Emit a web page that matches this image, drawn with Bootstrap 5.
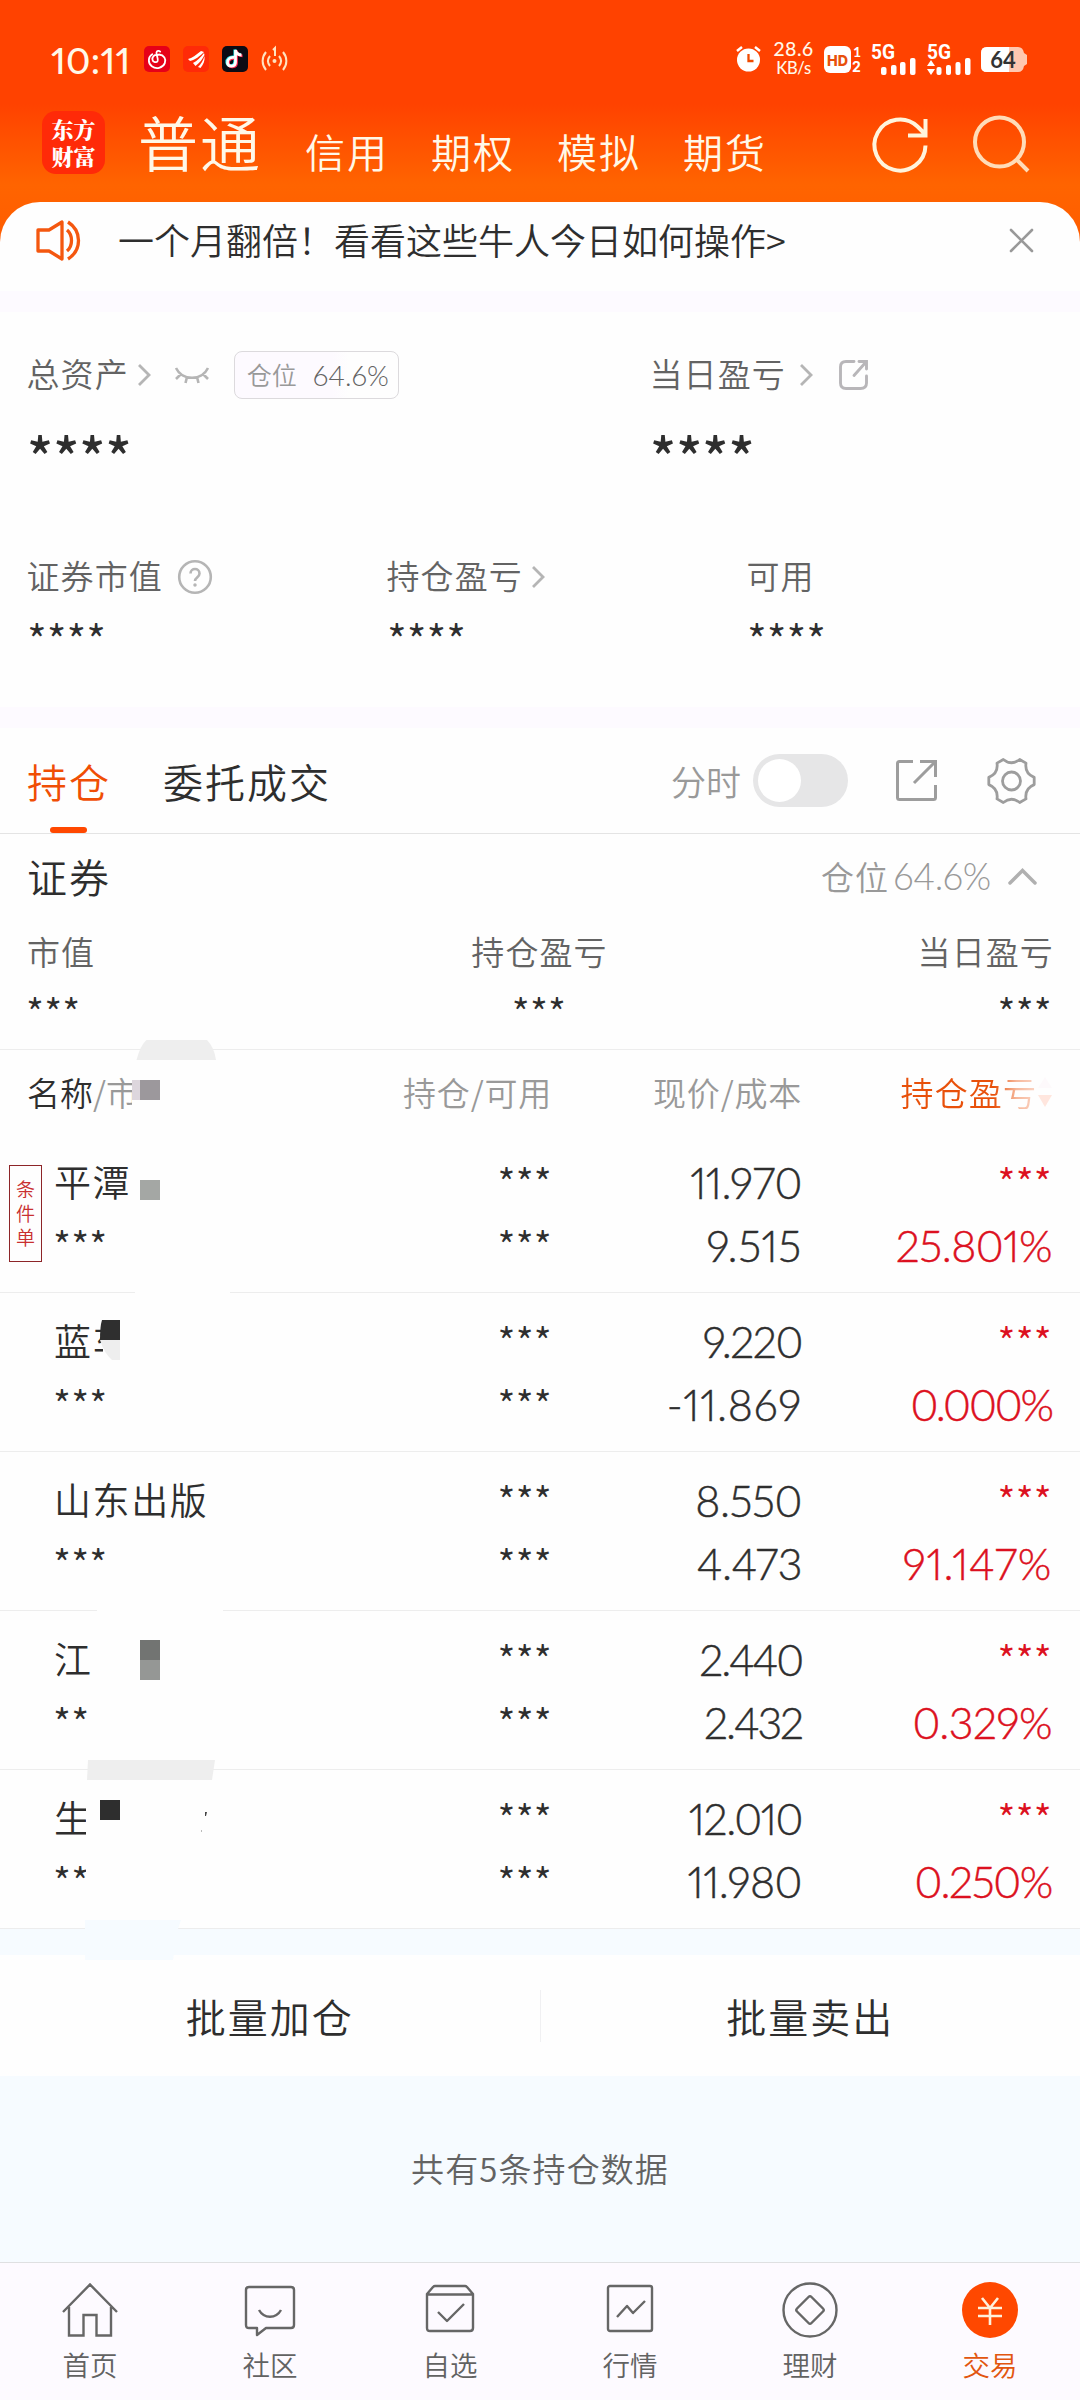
<!DOCTYPE html>
<html lang="zh-CN">
<head>
<meta charset="utf-8">
<meta name="viewport" content="width=device-width, initial-scale=1">
<title>持仓</title>
<link href="https://cdn.jsdelivr.net/npm/bootstrap@5.3.0/dist/css/bootstrap.min.css" rel="stylesheet">
<style>
body{width:1080px;height:2400px;margin:0;background:#fefefe;color:#2e2e2e;font-family:"Noto Sans CJK SC",sans-serif;font-weight:350;line-height:1;overflow:hidden}
svg{display:block;flex:none;overflow:visible}
.latin{font-family:Lato,"Noto Sans CJK SC",sans-serif;font-variant-numeric:proportional-nums}
.tone-mid{color:#636363}.tone-soft{color:#999}.tone-hot{color:#f04e05}.tone-rise{color:#dc1020}
.app-head{height:242px;background:linear-gradient(#ff4200 0,#ff4200 104px,#ff6400 185px,#ff5c00 242px);color:#fff8e8}
.status{height:118px;padding:0 52px 0 51px}
.clock{font-size:37px;font-weight:500;width:78px;letter-spacing:.3px;white-space:nowrap}
.brand{height:84px}
.logo-box{width:63px;height:63px;border-radius:14px;background:#ff2a08;color:#fff;font-family:"Noto Serif CJK SC","Noto Sans CJK SC",serif;font-weight:900;font-size:22px;text-align:center;padding-top:4px}
.logo-box span{display:block;line-height:27px;height:27px}
.brand-main{font-size:60px;letter-spacing:2px}
.brand-tab{font-size:40px;letter-spacing:2px;margin-right:42px;margin-top:13px}
.sheet{margin-top:-40px;height:89px;background:#fefefe;border-radius:40px 40px 0 0;padding:0 47px 12px 36px}
.notice{font-size:36px;padding-bottom:3px}
.strip{height:21px;background:#fdfaff}
.lab{font-size:33px;letter-spacing:1.1px;line-height:34px}
.assets .lab{padding-bottom:4px;margin-left:-1.5px}
.ttl{font-size:40px;letter-spacing:2px;line-height:42px}
.star{line-height:20px;height:20px;font-family:"Noto Sans CJK SC",sans-serif;margin-left:-1px}
.star-xl{font-size:54px;font-weight:500;padding-top:8px}
.star-lg{font-size:43px;padding-top:6px}
.star-md{font-size:39px;letter-spacing:.2px;padding-top:8px}
.pos-chip{width:165px;height:48px;border:1px solid #dcdadd;border-radius:8px;background:linear-gradient(90deg,#fdfaff 60%,#fefefe 70%);font-size:25px;padding:0 9px 0 12px}
.tabs-bar{height:106px;border-bottom:1px solid #e4e4e4;padding-left:27px;padding-right:44px}
.tab-on::after{content:"";position:absolute;left:23px;bottom:0;width:37px;height:6px;border-radius:3px;background:#ff4800}
.tgl{width:95px;height:53px;border-radius:27px;background:#e6e6e7;padding:5px}
.tgl i{display:block;width:43px;height:43px;border-radius:50%;background:#fff}
.grid-row{display:grid;grid-template-columns:302px 250px 250px 250px;height:159px;border-bottom:1px solid #ededed;padding-top:29px;grid-template-rows:40px 40px;row-gap:23px}
.grid-row>*{text-align:right;line-height:40px;height:40px}
.grid-row>.nm,.grid-row>.nq{text-align:left;padding-left:54px}
.grid-row>.nm{font-size:37px;letter-spacing:1.6px;margin-top:-2px}
.num{font-size:43px;font-family:Lato,sans-serif;font-variant-numeric:proportional-nums;letter-spacing:-.5px;-webkit-text-stroke:.45px currentColor}
.num.nt1{letter-spacing:-1.4px}.num.nt2{letter-spacing:-2.1px}.num.nw{letter-spacing:.7px}
.grid-row>.star{padding-top:0;margin-top:-2px}
.th-row{display:grid;grid-template-columns:302px 250px 250px 250px;height:85px;border-top:1px solid #ededed;align-items:center;text-align:right}
.fade-hot{background:linear-gradient(90deg,#e8500a 0,#e8500a 68%,#f6b79a 85%,#fbd5c5);-webkit-background-clip:text;background-clip:text;color:transparent}
.cond{left:9px;top:31px;width:33px;height:97px;border:1px solid #8d2528;color:#c93030;font-size:19px;line-height:24px;text-align:center;padding-top:11px}
.grid-row>.cond{line-height:24px;height:97px;text-align:center}
.patch{position:absolute;display:block}
.acts{height:121px;background:#fefefe}
.acts .mid{width:1px;height:52px;background:#f0f0f2}
.tail{background:#f6fbff;height:186px;padding-bottom:2px}
.navb{height:138px;background:#fdfaff;border-top:1px solid #dfe0e2;padding-top:19px}
.navb a{width:180px;text-decoration:none;color:#626262;font-size:27.5px}
.navb a svg{margin-bottom:13px}
</style>
</head>
<body>
<header class="app-head">
  <div class="status d-flex align-items-center">
    <span class="latin clock">10:11</span>
    <svg style="margin-left:15px" width="26" height="26" viewBox="0 0 26 26"><rect width="26" height="26" rx="5" fill="#e60018"/><path d="M14 9c-4-.8-6 2-5.500 4.800.4 2.500 4 3.300 5.200 1 .8-1.800-1.500-6-1.200-8.200.2-2 2.500-2.200 3.700-1M15 8.500c5 .5 7.500 4.500 5.800 8.700-2 5-8.800 6.300-13 3C3.600 17 4 10.700 8.300 8.300" fill="none" stroke="#fff" stroke-width="1.800" stroke-linecap="round"/></svg>
    <svg style="margin-left:13px" width="26" height="26" viewBox="0 0 26 26"><rect width="26" height="26" rx="5" fill="#ff2a08"/><path d="M5 13c4-1 8-4 13-8l3 1c-4 4-9 8-14 9zM10 17c4-2 8-6 11-10l.5 2c-2 4-5 8-9 11zM15 21c3-3 5-6 6.500-11 .5 5-1 8-4 12z" fill="#fff"/></svg>
    <svg style="margin-left:13px" width="26" height="26" viewBox="0 0 26 26"><rect width="26" height="26" rx="5" fill="#0c0b14"/><g fill="none" stroke-width="2.800"><path d="M12 11.500c-4-.5-7 2-6.500 5.500.6 4 8 4.500 8-1V4c.5 3 2.500 5 6 5" stroke="#25e6e6" transform="translate(-.7 -.5)"/><path d="M12 11.500c-4-.5-7 2-6.500 5.500.6 4 8 4.500 8-1V4c.5 3 2.500 5 6 5" stroke="#ff2a55" transform="translate(1 .8)"/><path d="M12 11.500c-4-.5-7 2-6.500 5.500.6 4 8 4.500 8-1V4c.5 3 2.500 5 6 5" stroke="#fff"/></g></svg>
    <svg style="margin-left:13px" width="27" height="26" viewBox="0 0 27 26" fill="none" stroke="#ffe3c0" stroke-width="2"><path d="M5 6C.5 11.500.5 18.500 5 24M22 6c4.500 5.500 4.500 12.500 0 18M9 10c-2.500 3-2.500 7 0 10M18 10c2.500 3 2.500 7 0 10M12 4l2-2v8"/><circle cx="13.500" cy="15" r="2" fill="#ffe3c0" stroke="none"/></svg>
    <svg class="ms-auto" width="25" height="26" viewBox="0 0 25 26"><circle cx="12.500" cy="14" r="11.500" fill="#fff"/><path d="M1 5l5-4M24 5l-5-4" stroke="#fff" stroke-width="2.500"/><path d="M12.500 8v7h5" fill="none" stroke="#f04a00" stroke-width="2.300"/></svg>
    <div class="latin text-center" style="margin-left:11px;width:43px;font-size:19.500px;line-height:18px;font-weight:500;letter-spacing:.4px;padding-bottom:2px">28.6<br><span style="font-size:16.500px;letter-spacing:-.3px">KB/s</span></div>
    <svg style="margin-left:9px" width="38" height="27" viewBox="0 0 38 27"><rect width="27" height="27" rx="6" fill="#fff"/><text x="13.500" y="19.500" font-family="Inter,sans-serif" font-size="15" font-weight="800" text-anchor="middle" fill="#e8500a" textLength="21" lengthAdjust="spacingAndGlyphs">HD</text><text x="33" y="11" font-family="Lato,sans-serif" font-size="14" font-weight="700" text-anchor="middle" fill="#fff">1</text><text x="32.500" y="26" font-family="Inter,sans-serif" font-size="14" font-weight="700" text-anchor="middle" fill="#fff">2</text></svg>
    <svg style="margin-left:9px" width="46" height="31" viewBox="0 0 46 31" fill="#fff"><text x="0" y="15" font-family="Roboto,sans-serif" font-size="20" font-weight="700" textLength="24" lengthAdjust="spacingAndGlyphs">5G</text><rect x="10" y="23" width="5.500" height="8" rx="2"/><rect x="20" y="21" width="5.500" height="10" rx="2"/><rect x="29" y="18" width="5.500" height="13" rx="2"/><rect x="39" y="14" width="5.500" height="17" rx="2"/></svg>
    <svg style="margin-left:10px" width="45" height="31" viewBox="0 0 45 31" fill="#fff"><text x="0" y="15" font-family="Roboto,sans-serif" font-size="20" font-weight="700" textLength="24" lengthAdjust="spacingAndGlyphs">5G</text><path d="M0 22l4-6 4 6zM0 25l4 6 4-6z"/><rect x="9.500" y="23" width="5" height="8" rx="2"/><rect x="19" y="21" width="5" height="10" rx="2"/><rect x="28.500" y="18" width="5" height="13" rx="2"/><rect x="38" y="14" width="5.500" height="17" rx="2"/></svg>
    <svg style="margin-left:9px" width="47" height="25" viewBox="0 0 47 25"><path d="M6 0h31q5 0 6 6l3 2v9l-3 2q-1 6-6 6H6q-6 0-6-6V6Q0 0 6 0z" fill="#ffc8b0"/><path d="M6 0h22v25H6q-6 0-6-6V6Q0 0 6 0z" fill="#fff"/><text x="22" y="20.500" font-family="Lato,sans-serif" font-size="22" font-weight="700" text-anchor="middle" fill="#333">64</text></svg>
  </div>
  <div class="brand d-flex align-items-start">
    <div class="logo-box" style="margin:-7px 34px 0 42px"><span>东方</span><span>财富</span></div>
    <span class="brand-main" style="margin:-7px 43px 0 -1px">普通</span>
    <span class="brand-tab">信用</span>
    <span class="brand-tab">期权</span>
    <span class="brand-tab">模拟</span>
    <span class="brand-tab">期货</span>
    <svg class="ms-auto" style="margin-top:-1px" width="55" height="56" viewBox="0 0 55 56" fill="none" stroke="#fff4dc" stroke-width="4"><path d="M52.500 28.500A25.500 25.500 0 1 1 44.500 9.500L52 17M52.500 2v16.500H35"/></svg>
    <svg style="margin:-3px 51px 0 45px" width="56" height="57" viewBox="0 0 56 57" fill="none" stroke="#ffdcb8" stroke-width="4"><circle cx="26.500" cy="27" r="24.500"/><path d="M43 44l12 12"/></svg>
  </div>
</header>
<section class="sheet d-flex align-items-center position-relative">
  <svg width="45" height="41" viewBox="0 0 45 41" fill="none" stroke="#f4570f" stroke-width="3.300" stroke-linejoin="round"><path d="M2 10h11L26 2v37l-13-8H2z"/><path d="M31 10c6 5 6 16 0 21M32 2c14 9 14 28 0 37"/></svg>
  <span class="notice" style="margin-left:37px">一个月翻倍！看看这些牛人今日如何操作&gt;</span>
  <svg class="ms-auto" width="23" height="23" viewBox="0 0 23 23" stroke="#999" stroke-width="2.600" stroke-linecap="round"><path d="M1 1l21 21M22 1L1 22"/></svg>
</section>
<div class="strip"></div>
<section class="assets" style="height:395px;padding:38px 0 0 28px">
  <div class="d-flex" style="height:103px">
    <div style="width:623px">
      <div class="d-flex align-items-center" style="height:50px">
        <span class="lab tone-mid">总资产</span>
        <svg style="margin-left:8px" width="14" height="22" viewBox="0 0 14 22" fill="none" stroke="#b5b5b5" stroke-width="2.800"><path d="M2 1l10 10L2 21"/></svg>
        <svg style="margin-left:24px" width="34" height="16" viewBox="0 0 34 16" fill="none" stroke="#b5b5b5" stroke-width="2.600"><path d="M1 1c6 13 26 13 32 0M6 7l-5 5M28 7l5 5M12 10l-1.500 6M22 10l1.500 6"/></svg>
        <span class="pos-chip d-flex align-items-center justify-content-between" style="margin-left:25px"><span class="tone-soft" style="padding-bottom:2px">仓位</span><span class="latin tone-mid" style="font-size:28px">64.6%</span></span>
      </div>
      <div class="star star-xl" style="margin-top:37px">****</div>
    </div>
    <div>
      <div class="d-flex align-items-center" style="height:50px">
        <span class="lab tone-mid">当日盈亏</span>
        <svg style="margin-left:13px" width="14" height="22" viewBox="0 0 14 22" fill="none" stroke="#b5b5b5" stroke-width="2.800"><path d="M2 1l10 10L2 21"/></svg>
        <svg style="margin-left:26px" width="29" height="30" viewBox="0 0 29 30" fill="none" stroke="#b8b6b9" stroke-width="2.900" stroke-linecap="round"><path d="M15 1.500H7q-5.500 0-5.500 5.500v16q0 5.500 5.500 5.500h14.500q6 0 6-5.500v-7M20 1.500h7.500V9M27 2L15 15.500"/></svg>
      </div>
      <div class="star star-xl" style="margin-top:37px">****</div>
    </div>
  </div>
  <div class="d-flex" style="margin-top:102px">
    <div style="width:360px"><div class="d-flex align-items-center" style="height:44px"><span class="lab tone-mid">证券市值</span>
      <svg style="margin-left:15px" width="34" height="34" viewBox="0 0 34 34" fill="none" stroke="#b5b5b5" stroke-width="2.600"><circle cx="17" cy="17" r="15.800"/><path d="M12.500 13.500c0-6 9-6 9 0 0 4-4.500 4-4.500 7.500"/><circle cx="17" cy="25" r="1" fill="#b5b5b5" stroke-width="1.500"/></svg></div>
      <div class="star star-lg" style="margin-top:23px">****</div></div>
    <div style="width:360px"><div class="d-flex align-items-center" style="height:44px"><span class="lab tone-mid">持仓盈亏</span>
      <svg style="margin-left:8px" width="14" height="22" viewBox="0 0 14 22" fill="none" stroke="#b5b5b5" stroke-width="2.800"><path d="M2 1l10 10L2 21"/></svg></div>
      <div class="star star-lg" style="margin-top:23px">****</div></div>
    <div><div class="d-flex align-items-center" style="height:44px"><span class="lab tone-mid">可用</span></div>
      <div class="star star-lg" style="margin-top:23px">****</div></div>
  </div>
</section>
<div class="strip"></div>
<nav class="tabs-bar d-flex align-items-center">
  <span class="tab-on position-relative ttl tone-hot h-100 d-flex align-items-center">持仓</span>
  <span class="ttl" style="margin-left:52px">委托成交</span>
  <span class="tone-soft ms-auto" style="font-size:35px">分时</span>
  <span class="tgl" style="margin-left:12px"><i></i></span>
  <svg style="margin-left:48px" width="41" height="41" viewBox="0 0 41 41" fill="none" stroke="#9d9d9d" stroke-width="3"><path d="M17 1.500H3.500q-2 0-2 2v34q0 2 2 2h34q2 0 2-2V25M24 1.500h15.500V17M39 2L18 23"/></svg>
  <svg style="margin-left:50px" width="49" height="48" viewBox="0 0 48 48" fill="none" stroke="#9d9d9d" stroke-width="2.800" stroke-linejoin="round"><path d="M46.700 20.400V27.600Q37 31.500 38.500 41.900L32.200 45.500Q24 39 15.800 45.500L9.500 41.900Q11 31.500 1.300 27.600V20.400Q11 16.500 9.500 6.100L15.800 2.500Q24 9 32.200 2.500L38.500 6.100Q37 16.500 46.700 20.400z"/><circle cx="24" cy="24" r="9"/></svg>
</nav>
<section style="height:215px;padding:21px 28px 0 27px">
  <div class="d-flex align-items-center" style="height:42px">
    <span class="ttl">证券</span>
    <span class="lab tone-soft ms-auto">仓位</span><span class="latin tone-soft" style="font-size:36.500px;margin-left:4px;letter-spacing:-.3px">64.6%</span>
    <svg style="margin:0 15px 0 17px" width="29" height="17" viewBox="0 0 29 17" fill="none" stroke="#b0b0b0" stroke-width="3.500" stroke-linecap="round"><path d="M2 15L14.500 2.500 27 15"/></svg>
  </div>
  <div class="row gx-0" style="margin-top:37px">
    <div class="col-4"><div class="lab tone-mid">市值</div><div class="star star-md" style="margin-top:25px">***</div></div>
    <div class="col-4 text-center"><div class="lab tone-mid">持仓盈亏</div><div class="star star-md" style="margin-top:25px">***</div></div>
    <div class="col-4 text-end"><div class="lab tone-mid" style="margin-right:-2px">当日盈亏</div><div class="star star-md" style="margin-top:25px">***</div></div>
  </div>
</section>
<main>
  <div class="th-row position-relative lab">
    <span class="text-start" style="padding-left:27px;letter-spacing:0">名称<span class="tone-soft">/市</span></span>
    <span class="tone-soft" style="letter-spacing:.8px">持仓/可用</span>
    <span class="tone-soft" style="letter-spacing:.8px">现价/成本</span>
    <span class="d-flex justify-content-end align-items-center"><span class="fade-hot">持仓盈亏</span><svg style="margin-left:1px" width="14" height="30" viewBox="0 0 14 30"><path d="M0 11L7 0l7 11z" fill="#fdf9fb"/><path d="M0 18h14L7 30z" fill="#ffe6de"/></svg></span>
    <svg class="patch" style="left:128px;top:-10px" width="100" height="62" viewBox="128 1040 100 62"><path d="M136.500 1060q4-15 10-20H207q7 7 9 20z" fill="#eee"/><path d="M132 1079h40v33h-40z" fill="#fefefe"/><path d="M132 1080h8v20h-8z" fill="#ddd6dd"/><path d="M140 1080h20v20h-20z" fill="#9c989c"/></svg>
  </div>
  <div class="grid-row position-relative">
    <span class="nm">平潭</span><span class="star star-md">***</span><span class="num">11.970</span><span class="star star-md tone-rise">***</span>
    <span class="nq star star-md">***</span><span class="star star-md">***</span><span class="num nw">9.515</span><span class="num tone-rise">25.801%</span>
    <span class="patch cond">条<br>件<br>单</span>
    <svg class="patch" style="left:135px;top:46px" width="95" height="116"><path d="M5 0h20v20H5z" fill="#a4a7a4"/><path d="M0 108h95v8H0z" fill="#fefefe"/></svg>
  </div>
  <div class="grid-row position-relative">
    <span class="nm">蓝车</span><span class="star star-md">***</span><span class="num nt1">9.220</span><span class="star star-md tone-rise">***</span>
    <span class="nq star star-md">***</span><span class="star star-md">***</span><span class="num nw">-11.869</span><span class="num nt2 tone-rise">0.000%</span>
    <svg class="patch" style="left:98px;top:20px" width="40" height="55"><path d="M5 0h35v55H5z" fill="#fefefe"/><path d="M4 7h18v20H2q0-14 2-20z" fill="#2f2f2f"/><path d="M2 27h20v20h-8Q6 40 2 27z" fill="#eee"/></svg>
  </div>
  <div class="grid-row position-relative">
    <span class="nm">山东出版</span><span class="star star-md">***</span><span class="num">8.550</span><span class="star star-md tone-rise">***</span>
    <span class="nq star star-md">***</span><span class="star star-md">***</span><span class="num">4.473</span><span class="num nw tone-rise">91.147%</span>
    <svg class="patch" style="left:97px;top:155px" width="126" height="6"><path d="M0 0h126v6H0z" fill="#fefefe"/></svg>
  </div>
  <div class="grid-row position-relative">
    <span class="nm">江</span><span class="star star-md">***</span><span class="num nt2">2.440</span><span class="star star-md tone-rise">***</span>
    <span class="nq star star-md">**</span><span class="star star-md">***</span><span class="num nt2">2.432</span><span class="num tone-rise">0.329%</span>
    <svg class="patch" style="left:87px;top:29px" width="130" height="140"><path d="M53 0h20v20H53z" fill="#727472"/><path d="M53 20h20v20H53z" fill="#959795"/><path d="M1 120h127l-3 20H0z" fill="#eee"/></svg>
  </div>
  <div class="grid-row position-relative">
    <span class="nm">生</span><span class="star star-md">***</span><span class="num nt1">12.010</span><span class="star star-md tone-rise">***</span>
    <span class="nq star star-md">**</span><span class="star star-md">***</span><span class="num">11.980</span><span class="num nt1 tone-rise">0.250%</span>
    <svg class="patch" style="left:85px;top:30px;z-index:2" width="130" height="161"><path d="M1 0h14v100H1z" fill="#fefefe"/><path d="M15 0h20v20H15z" fill="#2e2e2e"/><path d="M120 12h2l-1 4h-1z" fill="#444"/><path d="M116 30h1v2h-1z" fill="#bbb"/><path d="M0 120h96l-3 9-5 31H0z" fill="#f6fbff"/></svg>
  </div>
</main>
<div style="height:26px;background:#f6fbff"></div>
<div class="acts d-flex align-items-center">
  <span class="ttl flex-fill text-center">批量加仓</span><span class="mid"></span><span class="ttl flex-fill text-center">批量卖出</span>
</div>
<div class="tail d-flex align-items-center justify-content-center"><span class="lab tone-mid">共有5条持仓数据</span></div>
<nav class="navb d-flex">
  <a class="d-flex flex-column align-items-center" href="#"><svg width="56" height="56" viewBox="0 0 56 56" fill="none" stroke="#666" stroke-width="2.400"><path d="M1 30L28 2.500 55 30M7 25v28.500h14.500V33h13v20.500H49V25"/></svg>首页</a>
  <a class="d-flex flex-column align-items-center" href="#"><svg width="50" height="56" viewBox="0 0 50 56" fill="none" stroke="#666" stroke-width="2.400" stroke-linejoin="round"><path d="M4 5h42q3 0 3 3v35q0 3-3 3H21l-9 7v-7H4q-3 0-3-3V8q0-3 3-3z"/><path d="M14 28c5 9 17 9 22 0"/></svg>社区</a>
  <a class="d-flex flex-column align-items-center" href="#"><svg width="48" height="56" viewBox="0 0 48 56" fill="none" stroke="#666" stroke-width="2.400" stroke-linejoin="round"><path d="M1 12l6-7q1-1 2-1h30q1 0 2 1l6 7v34q0 3-3 3H4q-3 0-3-3zM1 12.500h46M12 30l9 9 17-17"/></svg>自选</a>
  <a class="d-flex flex-column align-items-center" href="#"><svg width="46" height="56" viewBox="0 0 46 56" fill="none" stroke="#666" stroke-width="2.400" stroke-linejoin="round"><rect x="1" y="4" width="44" height="45" rx="2"/><path d="M10 35l10-11 6 7 12-12"/></svg>行情</a>
  <a class="d-flex flex-column align-items-center" href="#"><svg width="56" height="56" viewBox="0 0 56 56" fill="none" stroke="#666" stroke-width="2.400" stroke-linejoin="round"><circle cx="28" cy="28" r="26.500"/><path d="M26.500 15q1.500-1.500 3 0L41 26.500q1.500 1.500 0 3L29.500 41q-1.500 1.500-3 0L15 29.500q-1.500-1.500 0-3z"/></svg>理财</a>
  <a class="d-flex flex-column align-items-center tone-hot" href="#"><svg width="56" height="56" viewBox="0 0 56 56"><circle cx="28" cy="28" r="28" fill="#ff4800"/><path d="M20 16l8 10 8-10M28 26v17M16 26h24M16 34h24" fill="none" stroke="#fff0dc" stroke-width="2.600"/></svg><span style="color:#e2560f">交易</span></a>
</nav>
<script src="https://cdn.jsdelivr.net/npm/bootstrap@5.3.0/dist/js/bootstrap.bundle.min.js"></script>
</body>
</html>
